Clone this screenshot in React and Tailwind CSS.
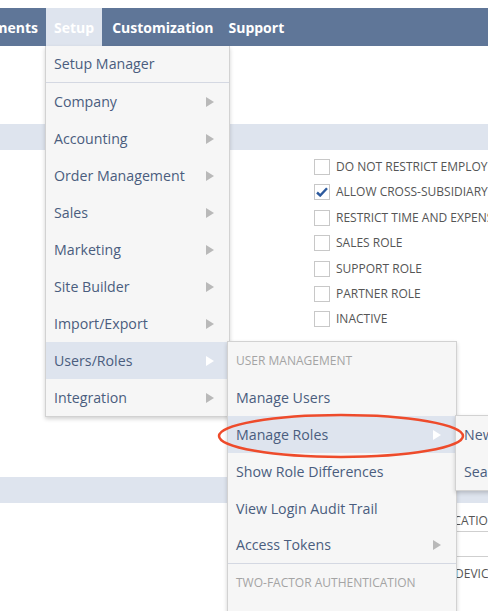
import React from "react";

const mainItems = [
  { label: "Company", arrow: true },
  { label: "Accounting", arrow: true },
  { label: "Order Management", arrow: true },
  { label: "Sales", arrow: true },
  { label: "Marketing", arrow: true },
  { label: "Site Builder", arrow: true },
  { label: "Import/Export", arrow: true },
  { label: "Users/Roles", arrow: true, active: true },
  { label: "Integration", arrow: true },
];

const roleFlags = [
  { label: "DO NOT RESTRICT EMPLOYEE FIELDS", checked: false },
  { label: "ALLOW CROSS-SUBSIDIARY RECORD VIEWING", checked: true },
  { label: "RESTRICT TIME AND EXPENSES", checked: false },
  { label: "SALES ROLE", checked: false },
  { label: "SUPPORT ROLE", checked: false },
  { label: "PARTNER ROLE", checked: false },
  { label: "INACTIVE", checked: false },
];

function Arrow({ white }) {
  return (
    <svg width="8" height="10" viewBox="0 0 8 10" className="shrink-0">
      <polygon points="0,0 8,5 0,10" fill={white ? "#ffffff" : "#b9b9b9"} />
    </svg>
  );
}

function MenuRow({ label, arrow, active, className = "" }) {
  return (
    <div
      className={`flex h-[37px] items-center justify-between pl-2 pr-[15px] text-[14.2px] text-[#4a5d7e] ${
        active ? "bg-[#dee4ee]" : ""
      } ${className}`}
    >
      <span className="whitespace-nowrap">{label}</span>
      {arrow && <Arrow white={active} />}
    </div>
  );
}

function Checkbox({ checked }) {
  return (
    <div className="flex h-[16px] w-[16px] shrink-0 items-center justify-center border border-[#c8c8c8] bg-white">
      {checked && (
        <svg width="12" height="10" viewBox="0 0 12 10">
          <path d="M1 5.5 L4.2 8.5 L11 1.2" fill="none" stroke="#2d5a9e" strokeWidth="2.4" />
        </svg>
      )}
    </div>
  );
}

export default function App() {
  return (
    <div
      className="relative h-[611px] w-[488px] overflow-hidden bg-white"
      style={{ fontFamily: "'Open Sans', 'Liberation Sans', sans-serif" }}
    >
      {/* top nav */}
      <div className="mt-2 flex h-[38px] items-stretch bg-[#5f7698] text-[14px] font-bold text-white">
        <div className="flex w-[46px] justify-end overflow-hidden">
          <span className="flex items-center whitespace-nowrap pr-2">Documents</span>
        </div>
        <div className="flex items-center bg-[#dee4ee] px-2">Setup</div>
        <div className="flex items-center pl-[10px] pr-[7px]">Customization</div>
        <div className="flex items-center px-2">Support</div>
      </div>

      {/* page content */}
      <div className="mt-[78px] h-[26px] bg-[#dee4ee]" />
      <div className="flex flex-col gap-[9.4px] pl-[314px] pt-[9px]">
        {roleFlags.map((f) => (
          <div key={f.label} className="flex items-center gap-[6px]">
            <Checkbox checked={f.checked} />
            <span className="whitespace-nowrap text-[12px] leading-[16px] text-[#555]">{f.label}</span>
          </div>
        ))}
      </div>
      <div className="mt-[150px] h-[26px] bg-[#dee4ee]" />
      <div className="flex flex-col pl-[396px] text-[12px] text-[#555]">
        <div className="flex h-[29px] items-end whitespace-nowrap border-b border-[#cfcfcf] pb-[1px]">
          AUTHENTICATION
        </div>
        <div className="h-[25px] border-b border-[#cfcfcf]" />
        <div className="flex h-[34px] items-center whitespace-nowrap pl-[59px]">DEVICE ID</div>
      </div>

      {/* Setup dropdown */}
      <div className="absolute left-[45px] top-[46px] w-[185px] border border-t-0 border-[#d2d2d2] bg-[#f6f6f6] shadow-[0_2px_4px_rgba(0,0,0,0.18)]">
        <MenuRow label="Setup Manager" className="h-[37px] border-b border-[#d4d8e2]" />
        {mainItems.map((it) => (
          <MenuRow key={it.label} {...it} />
        ))}
      </div>

      {/* Users/Roles submenu */}
      <div className="absolute left-[227px] top-[341px] w-[230px] border border-[#d2d2d2] bg-[#f6f6f6] shadow-[0_2px_4px_rgba(0,0,0,0.18)]">
        <div className="flex h-[37px] items-center pl-2 text-[12px] text-[#a4a4a4]">USER MANAGEMENT</div>
        <MenuRow label="Manage Users" />
        <MenuRow label="Manage Roles" arrow active />
        <MenuRow label="Show Role Differences" />
        <MenuRow label="View Login Audit Trail" />
        <MenuRow label="Access Tokens" arrow className="border-b border-[#d4d8e2]" />
        <div className="flex h-[37px] items-center pl-2 text-[12px] text-[#a4a4a4]">TWO-FACTOR AUTHENTICATION</div>
        <div className="h-[30px]" />
      </div>

      {/* Manage Roles submenu */}
      <div className="absolute left-[455px] top-[415px] w-[120px] border border-[#d2d2d2] bg-[#f6f6f6] shadow-[0_2px_4px_rgba(0,0,0,0.18)]">
        <MenuRow label="New" />
        <MenuRow label="Search" />
      </div>

      {/* highlight ellipse */}
      <svg className="pointer-events-none absolute left-[216px] top-[411px]" width="250" height="50" viewBox="0 0 250 50">
        <ellipse cx="125" cy="25" rx="122" ry="21" fill="none" stroke="#ee4b2b" strokeWidth="2.5" />
      </svg>
    </div>
  );
}
